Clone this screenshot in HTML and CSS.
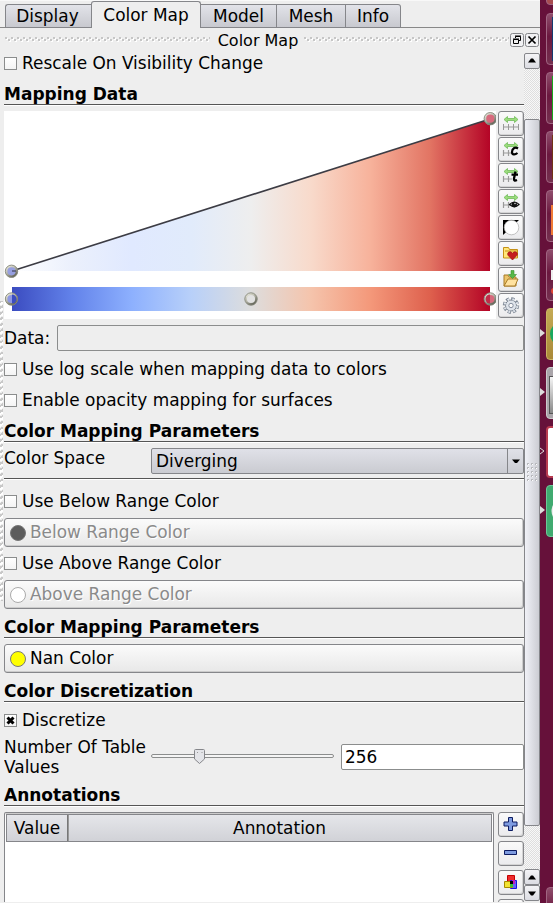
FILE: index.html
```html
<!DOCTYPE html>
<html lang="en">
<head>
<meta charset="utf-8">
<title>Color Map</title>
<link rel="stylesheet" href="styles.css">
</head>
<body>
<div class="screen">
  <main class="app">
    <nav class="tabs">
      <div class="tab t1">Display</div><div class="tab active">Color Map</div><div class="tab t3">Model</div><div class="tab t4">Mesh</div><div class="tab t5">Info</div>
    </nav>
    <header class="dock">
      <svg class="grip" height="8"><defs><pattern id="grip" width="6" height="8" patternUnits="userSpaceOnUse"><path d="M0 1h2v2h-2zM3 3h2v2h-2z" fill="#c6c6c6"/><path d="M2 2h1v2h-2v-1h1zM5 4h1v2h-2v-1h1z" fill="#fff"/></pattern></defs><rect width="100%" height="6" fill="url(#grip)"/></svg>
      <span class="dock-title">Color Map</span>
      <svg class="grip" height="8"><rect width="100%" height="6" fill="url(#grip)"/></svg>
      <div class="dock-buttons">
        <svg width="14" height="14" viewBox="0 0 14 14"><rect x=".5" y=".5" width="13" height="13" rx="2" fill="#f1f1f3" stroke="#85868a"/><path d="M5.500 5V3.500h5v4H9M5 3h6" fill="none" stroke="#000"/><path d="M3.500 6.500h5v4h-5zM3 6h6" fill="#eee" stroke="#000"/></svg>
        <svg width="14" height="14" viewBox="0 0 14 14"><rect x=".5" y=".5" width="13" height="13" rx="2" fill="#f1f1f3" stroke="#85868a"/><path d="M3.500 3.500l7 7M10.500 3.500l-7 7" stroke="#000" stroke-width="1.700"/></svg>
      </div>
    </header>
    <div class="body">
      <div class="content">
        <div class="check r1"><i class="box"></i>Rescale On Visibility Change</div>
        <h2>Mapping Data</h2>
        <div class="editor">
          <svg class="plot" width="492" height="208" viewBox="4 111 492 208">
            <defs>
              <linearGradient id="bar" gradientUnits="userSpaceOnUse" x1="12" x2="490" y1="0" y2="0"><stop offset="0" stop-color="#3b4cc0"/><stop offset=".125" stop-color="#6282ea"/><stop offset=".25" stop-color="#8db0fe"/><stop offset=".375" stop-color="#b8d0f9"/><stop offset=".5" stop-color="#dddddd"/><stop offset=".625" stop-color="#f5c4ac"/><stop offset=".75" stop-color="#f4987a"/><stop offset=".875" stop-color="#de604d"/><stop offset="1" stop-color="#b40426"/></linearGradient>
              <linearGradient id="fade" gradientUnits="userSpaceOnUse" x1="12" x2="490" y1="0" y2="0"><stop offset="0" stop-color="#fff"/><stop offset=".125" stop-color="#ebf0fc"/><stop offset=".25" stop-color="#e0e9ff"/><stop offset=".375" stop-color="#e1ebfb"/><stop offset=".5" stop-color="#eee"/><stop offset=".625" stop-color="#f8dacb"/><stop offset=".75" stop-color="#f7b29b"/><stop offset=".875" stop-color="#e27463"/><stop offset="1" stop-color="#b40426"/></linearGradient>
              <linearGradient id="ring" x1="0" y1="0" x2=".7" y2="1"><stop offset="0" stop-color="#eeeee2"/><stop offset=".45" stop-color="#bdbdb0"/><stop offset="1" stop-color="#65675b"/></linearGradient>
            </defs>
            <rect x="4" y="111" width="492" height="208" fill="#fff"/>
            <path d="M12 271L490 119V271z" fill="url(#fade)"/>
            <path d="M12 271L490 119" stroke="#3c3c44" stroke-width="1.600"/>
            <rect x="12" y="287" width="478" height="24" fill="url(#bar)"/>
            <g stroke="url(#ring)" stroke-width="2.200">
              <circle cx="11.500" cy="271.300" r="5.200" fill="#969fe0"/>
              <circle cx="490.300" cy="118.700" r="5.200" fill="#d8697c"/>
              <circle cx="11.500" cy="299" r="5.200" fill="#8e98e2"/>
              <circle cx="251" cy="299" r="5.200" fill="#e2e2e2"/>
              <circle cx="490.300" cy="299" r="5.200" fill="#d8697c"/>
            </g>
            <g fill="none" stroke="#85877b" stroke-width=".9"><circle cx="11.500" cy="271.300" r="6.200"/><circle cx="490.300" cy="118.700" r="6.200"/><circle cx="11.500" cy="299" r="6.200"/><circle cx="251" cy="299" r="6.200"/><circle cx="490.300" cy="299" r="6.200"/></g>
            <path d="M12 271h4" stroke="#334"/>
            <path d="M12 294.500a4 4 0 0 1 0 9z" fill="#3b4cc0"/>
            <path d="M490 294.500a4 4 0 0 0 0 9z" fill="#c22b48"/>
          </svg>
          <div class="tools">
            <div class="tool"><svg viewBox="0 0 26 26"><use href="#arrow"/><path d="M5.500 13v6M10.500 13v6M15.500 13v6M20.500 13v6M5 16h16" stroke="#999"/></svg></div>
            <div class="tool"><svg viewBox="0 0 26 26"><use href="#arrow"/><use href="#scale"/><path d="M20 11.500c-3-2-6 0-6 3.500 0 3 3 3 5.500 1" fill="none" stroke="#000" stroke-width="2.200"/></svg></div>
            <div class="tool"><svg viewBox="0 0 26 26"><use href="#arrow"/><use href="#scale"/><path d="M17.500 8.500l-1.500 7q-.5 3 3 1.500M13.500 11.700h6.500" fill="none" stroke="#000" stroke-width="2.300"/></svg></div>
            <div class="tool"><svg viewBox="0 0 26 26"><use href="#arrow"/><use href="#scale"/><path d="M11.500 15.500q5-5 9.500 0q-4.500 4.500-9.500 0z" fill="#eee" stroke="#111" stroke-width="1.200"/><circle cx="16.300" cy="15.500" r="2.700" fill="#111"/><circle cx="17" cy="14.500" r=".7" fill="#fff"/></svg></div>
            <div class="tool"><svg viewBox="0 0 26 26"><path d="M5 5h16L5 20z" fill="#000"/><circle cx="13.500" cy="12.500" r="7.300" fill="#fff" stroke="#aaa" stroke-width=".7"/></svg></div>
            <div class="tool"><svg viewBox="0 0 26 26"><path d="M5.500 17V6.500h5l1 2h8V17z" fill="#ffe778" stroke="#c59017"/><path d="M7 10h12" stroke="#c59017"/><path d="M14.500 19l-4.500-4.700c-1.500-3 2.500-5 4.500-2 2-3 6-1 4.500 2z" fill="#c51c20" stroke="#9e1015" stroke-width=".7"/></svg></div>
            <div class="tool"><svg viewBox="0 0 26 26"><path d="M6 19V8h4l1 2h7v9z" fill="#edc56b" stroke="#a77b28"/><path d="M6 19l4-7h10l-3 7z" fill="#ffe2a0" stroke="#a77b28"/><path d="M14.500 12l-4-4h2.500V4h3v4h2.500z" fill="#58b847" stroke="#3b8e32" stroke-width=".6" transform="translate(0 -.5)"/></svg></div>
            <div class="tool"><svg viewBox="0 0 26 26"><circle cx="13" cy="12.500" r="6.600" fill="none" stroke="#7b8592" stroke-width="3.200" stroke-dasharray="3.200 1.984"/><circle cx="13" cy="12.500" r="5.500" fill="#dfe4eb" stroke="#7b8592" stroke-width="1"/><circle cx="13" cy="12.500" r="6.400" fill="none" stroke="#dfe4eb" stroke-width="2.200" stroke-dasharray="1.800 3.227" stroke-dashoffset="-.6"/><circle cx="13" cy="12.500" r="2.200" fill="#fafafa" stroke="#8790a0"/></svg></div>
          </div>
        </div>
        <div class="data"><label>Data:</label><div class="field"></div></div>
        <div class="check r2"><i class="box"></i>Use log scale when mapping data to colors</div>
        <div class="check r2"><i class="box"></i>Enable opacity mapping for surfaces</div>
        <h2>Color Mapping Parameters</h2>
        <div class="space"><label>Color Space</label><div class="combo"><span>Diverging</span><b><svg width="8" height="5"><path d="M0 .5h8L5 4H3z"/></svg></b></div></div>
        <div class="rule"></div>
        <div class="check r3"><i class="box"></i>Use Below Range Color</div>
        <div class="button off"><i class="dot below"></i><span>Below Range Color</span></div>
        <div class="check r4"><i class="box"></i>Use Above Range Color</div>
        <div class="button off"><i class="dot above"></i><span>Above Range Color</span></div>
        <h2>Color Mapping Parameters</h2>
        <div class="button nan"><i class="dot yellow"></i><span>Nan Color</span></div>
        <h2>Color Discretization</h2>
        <div class="check r5"><i class="box"><svg width="11" height="11"><path d="M2.500 2.500l6 6M8.500 2.500l-6 6" stroke="#000" stroke-width="3"/></svg></i>Discretize</div>
        <div class="number">
          <label>Number Of Table Values</label>
          <svg class="slider" width="183" height="20"><rect x=".5" y="8.500" width="182" height="3" rx="1.500" fill="#f5f5f5" stroke="#8b8d8d"/><path d="M43.500 4.500q0-1 1-1h8q1 0 1 1v8.500l-5 4.500-5-4.500z" fill="#e3e4e8" stroke="#85868a"/><path d="M46 6.500h1M50.500 6.500h1" stroke="#999"/></svg>
          <div class="field entry">256</div>
        </div>
        <h2 class="h5">Annotations</h2>
        <div class="annotations">
          <div class="table"><div class="thead"><span>Value</span><span>Annotation</span></div></div>
          <div class="side">
            <div class="tool"><svg viewBox="0 0 26 26"><path d="M10.500 5.500h4v4.500h4.500v4h-4.500v4.500h-4V14H6v-4h4.500z" fill="#7e9be0" stroke="#0c1b60"/></svg></div>
            <div class="tool"><svg viewBox="0 0 26 26"><path d="M6.500 9.500h12v4h-12z" fill="#7e9be0" stroke="#0c1b60"/></svg></div>
            <div class="tool"><svg viewBox="0 0 26 26"><path d="M9.500 5.500h7v8h-7z" fill="#ee2c2c" stroke="#c40000"/><path d="M12.500 10.500h6v8h-6z" fill="#6464f4" stroke="#1414e0"/><path d="M6.500 11.500h8v6h-8z" fill="#f2e332" stroke="#a68a00"/><path d="M12 12h3v5h-3z" fill="#35c132"/><path d="M14 10h3v4h-3z" fill="#c31abb"/><path d="M12 11h3v3h-3z"/></svg></div>
            <div class="tool"></div>
          </div>
        </div>
      </div>
      <div class="scrollbar">
        <div class="step"><svg width="8" height="5"><path d="M0 4.500h8L5 .5H3z"/></svg></div>
        <div class="trough top"></div>
        <div class="thumb"><svg width="12" height="20"><defs><pattern id="dots" width="4" height="4" patternUnits="userSpaceOnUse"><path d="M1 0h2v2H1z" fill="#b8b9bd"/><path d="M2 1h1v1H2z" fill="#fff"/></pattern></defs><rect width="12" height="20" fill="url(#dots)"/></svg></div>
        <div class="trough bottom"></div>
        <div class="step"><svg width="8" height="5"><path d="M0 4.500h8L5 .5H3z"/></svg></div>
        <div class="step last"><svg width="8" height="5"><path d="M0 .5h8L5 4.500H3z"/></svg></div>
      </div>
    </div>
    <div class="splitter"></div>
  </main>
  <aside class="launcher">
    <div class="slot"><i class="tile red"></i></div>
    <div class="slot"><i class="tile"><u class="navy"></u></i></div>
    <div class="slot"><i class="tile"><u class="green"></u></i></div>
    <div class="slot"><i class="tile"><u class="brown"></u></i></div>
    <div class="slot"><i class="tile"><u class="orange"></u></i></div>
    <div class="slot"><i class="tile"><svg width="7" height="50"><path d="M4 20h3v10H4z" fill="#eee"/><circle cx="7" cy="41" r="3" fill="#e34633"/></svg></i></div>
    <div class="slot"><svg class="mark" width="5" height="8"><path d="M0 0l5 4-5 4z" fill="#ddd"/></svg><i class="tile gold"><svg width="7" height="50"><circle cx="15" cy="25" r="12" fill="#19a85e"/></svg></i></div>
    <div class="slot"><svg class="mark" width="5" height="8"><path d="M0 0l5 4-5 4z" fill="#ddd"/></svg><i class="tile gray"><u class="disk"></u></i></div>
    <div class="slot"><svg class="mark" width="5" height="8"><path d="M0 1l4 3-4 3" fill="none" stroke="#ddd"/></svg><i class="tile white"></i></div>
    <div class="slot"><svg class="mark" width="5" height="8"><path d="M0 0l5 4-5 4z" fill="#ddd"/></svg><i class="tile mint"><svg width="7" height="50"><circle cx="17" cy="25" r="12.500" fill="#eee"/></svg></i></div>
    <div class="slot trash"><i class="tile"></i></div>
  </aside>
</div>
<svg width="0" height="0" class="symbols"><symbol id="arrow" viewBox="0 0 26 26" width="26" height="26"><path d="M6 8.500l3.500-3v2h7v-2l3.500 3-3.500 3v-2h-7v2z" fill="#9bdc7c" stroke="#70bb58" stroke-width=".8"/></symbol><symbol id="scale" viewBox="0 0 26 26" width="26" height="26"><path d="M5.500 13v6M10.500 13v6M5 16h9" stroke="#999" stroke-width="1.200"/></symbol></svg>
</body>
</html>
```
FILE: styles.css
```css
* { box-sizing: border-box; }
body { margin: 0; background: #eee; color: #000; font: 16.95px/20px "DejaVu Sans", sans-serif; overflow: hidden; }
svg { display: block; }
.symbols { position: absolute; }
.screen { display: flex; width: 553px; height: 903px; overflow: hidden; }
.app { width: 540px; flex: none; position: relative; background: #eee; border-top: 1px solid #f8f8f8; }

.tabs { height: 27px; display: flex; align-items: flex-end; padding-left: 5px; background: linear-gradient(#888, #888) 0 26px / 100% 1px no-repeat; }
.tab { height: 24px; border: 1px solid #85868a; border-left-width: 0; background: linear-gradient(#e2e3e9, #c8c9cf); text-align: center; line-height: 23px; }
.tab.active { width: 110px; height: 27px; border-width: 1px 1px 0 1px; border-radius: 3px 3px 0 0; background: #eee; line-height: 27px; }
.t1 { width: 86px; padding-right: 2px; border-left-width: 1px; border-right-width: 0; border-radius: 3px 0 0 0; }
.t3 { width: 76px; }
.t4 { width: 69px; }
.t5 { width: 55px; border-radius: 0 3px 0 0; }

.dock { height: 22px; display: flex; align-items: center; padding: 1px 1px 0 5px; }
.grip { flex: 1; width: 0; margin-top: 1px; }
.dock-title { width: 94px; padding-left: 2px; text-align: center; font-size: 16px; margin-top: 2px; }
.dock-buttons { display: flex; gap: 1px; margin: 0 0 0 1px; }

.body { display: flex; height: 853px; }
.content { width: 520px; margin-left: 4px; flex: none; overflow: hidden; }
.check { height: 26px; display: flex; align-items: center; gap: 5px; white-space: nowrap; }
.box { width: 13px; height: 13px; border: 1px solid #8b8d8d; background: linear-gradient(#fff, #f4f4f4); flex: none; }
.r2 { margin-top: 5px; }
.r3 { margin-top: 8px; }
.r4 { margin-top: 3px; }
.r5 { margin-top: 4px; }
h2 { margin: 6px 0 0; height: 24px; font-size: 17px; line-height: 24px; font-weight: bold; background: linear-gradient(#555 0 1px, #fff 1px 2px) 0 22px / 100% 2px no-repeat; }
.h5 { margin-top: 5px; }
.editor { margin-top: 5px; display: flex; justify-content: space-between; background: #eee; }
.tools { width: 26px; display: flex; flex-direction: column; gap: 1px; }
.tool { width: 26px; height: 25px; flex: none; border: 1px solid #85868a; border-radius: 3px; background: linear-gradient(#fafafa, #ebebed); box-shadow: inset -1px -1px #d4d4d4; }
.tool svg { width: 26px; height: 26px; margin: -1px; }
.data { margin-top: 6px; display: flex; align-items: center; justify-content: space-between; }
.field { width: 467px; height: 26px; border: 1px solid #8b8d8d; border-radius: 2px; background: #eee; }
.field.entry { width: 183px; background: #fff; padding-left: 3px; line-height: 24px; }
.space { margin-top: 5px; display: flex; justify-content: space-between; }
.combo { width: 373px; height: 26px; display: flex; border: 1px solid #85868a; border-radius: 2px; background: linear-gradient(#e0e1e8, #cacbd1); line-height: 25px; }
.combo span { flex: 1; padding-left: 4px; }
.combo b { width: 16px; border-left: 1px solid #85868a; display: flex; align-items: center; justify-content: center; }
.rule { margin-top: 4px; height: 2px; background: linear-gradient(#555 0 1px, #fff 1px); }
.button { margin-top: 4px; height: 29px; border: 1px solid #85868a; border-radius: 3px; background: linear-gradient(#fbfbfb, #e8e8e8); box-shadow: inset -1px -1px #ccc; display: flex; align-items: center; gap: 4px; padding-left: 5px; }
.button span { margin-bottom: 2px; }
.nan { margin-top: 5px; }
.off { color: #8a8a8a; text-shadow: 1px 1px #fff; }
.dot { width: 16px; height: 16px; border-radius: 50%; border: 1px solid #777; }
.below { background: #5d5d5d; }
.above { background: #fff; border-color: #aaa; }
.yellow { background: #ff0; }
.number { margin-top: 4px; height: 41px; display: flex; align-items: center; padding-bottom: 2px; }
.number label { width: 147px; line-height: 20px; flex: none; }
.slider { margin-right: 7px; margin-top: -2px; }
.annotations { margin-top: 5px; display: flex; gap: 4px; height: 90px; overflow: hidden; }
.table { width: 490px; border: solid #85868a; border-width: 1px 1px 0; background: #fff; border-radius: 2px 2px 0 0; padding: 1px 1px 0; box-shadow: inset 0 1px #ccc; }
.thead { height: 28px; display: flex; border: 1px solid #85868a; background: linear-gradient(#e5e6ea, #d1d2d7); text-align: center; line-height: 27px; }
.thead span:first-child { width: 61px; border-right: 1px solid #777; box-shadow: 1px 0 #999; }
.thead span:last-child { flex: 1; }
.side { display: flex; flex-direction: column; gap: 4px; }

.scrollbar { width: 16px; padding-top: 3px; flex: none; display: flex; flex-direction: column; }
.step { height: 16px; border: 1px solid #85868a; border-radius: 2px; background: linear-gradient(#f4f4f6, #dbdce2); display: flex; align-items: center; justify-content: center; flex: none; }
.step:first-child { padding-bottom: 2px; }
.trough { background: repeating-conic-gradient(#dedede 0 25%, #f8f8f8 0 50%) 0 0 / 2px 2px; }
.top { height: 50px; flex: none; }
.thumb { height: 707px; flex: none; border: 1px solid #85868a; border-radius: 2px; background: linear-gradient(90deg, #f0f1f7, #cccdd3); display: flex; align-items: center; justify-content: center; }
.bottom { flex: 1; }
.last { margin-bottom: 2px; }
.splitter { position: absolute; left: 0; top: 300px; width: 3px; height: 300px; background: repeating-linear-gradient(150deg, #c8c8c8 0 2px, #fff 2px 4px, #eee 4px 5px); }

.launcher { width: 13px; height: 903px; overflow: hidden; background: #66113a; position: relative; display: flex; flex-direction: column; }
.slot { height: 52px; margin-bottom: 7px; padding-left: 6px; position: relative; flex: none; }
.slot:first-child { margin-top: -47px; margin-bottom: 8px; }
.trash { margin-top: 343px; }
.tile { display: block; width: 20px; height: 52px; border: 1px solid #a06582; border-radius: 4px; background: linear-gradient(#8f4d6c, #6b183f 45%, #75304f); overflow: hidden; }
.tile u { display: block; width: 12px; height: 44px; margin: 3px 0 0 5px; }
.mark { position: absolute; left: 0; top: 21px; }
.red { background: #a84c50; }
.navy { background: #123a70; }
.green { background: #18a51c; }
.brown { background: #713314; }
.tile .orange { background: #f17a35; height: 30px; margin-top: 14px; margin-left: 4px; }
.gold { background: linear-gradient(#c4aa55, #aa8938); border-color: #cab462; }
.gray { background: #aaa5aa; border-color: #ccc; }
.tile .disk { background: linear-gradient(#f6f6f6, #888); border: 1px solid #555; height: 38px; margin-top: 8px; margin-left: 2px; }
.white { background: #fff; border: 2px solid #b83b50; }
.mint { background: #40aa70; border-color: #6cc797; }
```
